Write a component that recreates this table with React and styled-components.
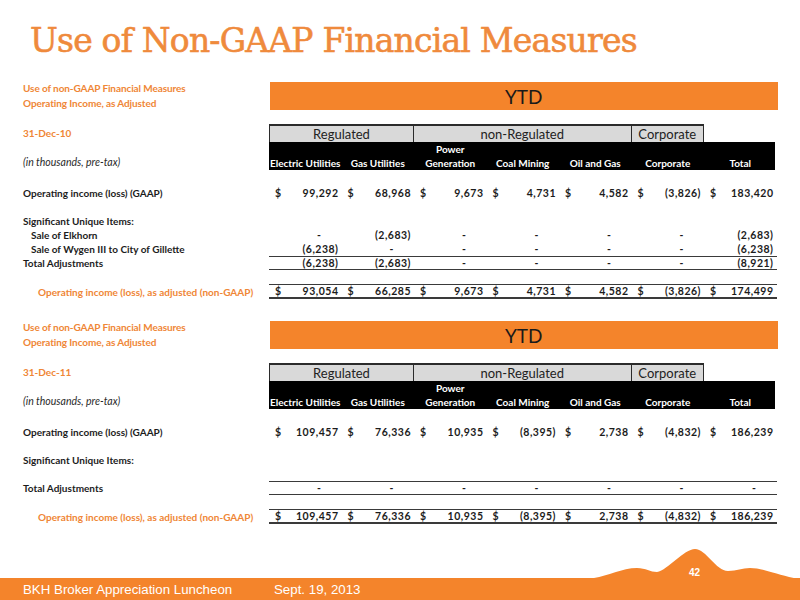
import React from 'react';
import styled, { createGlobalStyle, css } from 'styled-components';

const ORANGE = '#f4842b';
const TEXT_ORANGE = '#ef8636';
const INK = '#1c1c1c';

const GlobalStyle = createGlobalStyle`
  html, body {
    margin: 0;
    padding: 0;
    background: #fff;
  }
  body {
    font-family: 'Lato', 'Liberation Sans', sans-serif;
  }
`;

const rowGrid = css`
  display: grid;
  grid-template-columns: 246px repeat(7, 72.5px);
`;

const Page = styled.div`
  width: 800px;
  height: 600px;
  display: flex;
  flex-direction: column;
  overflow: hidden;
  background: #fff;
`;

const Title = styled.h1`
  box-sizing: border-box;
  height: 80px;
  margin: 0;
  padding: 21px 0 0 30px;
  font-family: 'DejaVu Serif', 'Liberation Serif', serif;
  font-weight: normal;
  font-size: 33px;
  line-height: 40px;
  letter-spacing: -0.8px;
  color: #ef8a3c;
  -webkit-text-stroke: 0.6px #ef8a3c;
  white-space: nowrap;
`;

const Block = styled.section`
  margin-left: 23px;
  margin-top: ${p => p.$gap || 0}px;
`;

const HeadRow = styled.div`
  ${rowGrid};
  height: 32px;
  align-items: center;
`;

const CaptionStack = styled.div`
  display: flex;
  flex-direction: column;
`;

const Caption = styled.span`
  font-size: 10px;
  line-height: 15px;
  letter-spacing: -0.1px;
  font-weight: bold;
  color: ${TEXT_ORANGE};
  white-space: nowrap;
`;

const YtdBar = styled.div`
  grid-column: 2 / span 7;
  height: 28px;
  margin-left: 1px;
  margin-right: -1px;
  background: ${ORANGE};
  display: flex;
  align-items: center;
  justify-content: center;
  font-size: 19px;
  color: #1a1a1a;
`;

const GroupRow = styled.div`
  ${rowGrid};
  height: 18px;
  margin-top: 12px;
`;

const DateLabel = styled.span`
  align-self: center;
  font-size: 10px;
  font-weight: bold;
  color: ${TEXT_ORANGE};
`;

const GroupBox = styled.div`
  grid-column: span ${p => p.$span};
  box-sizing: border-box;
  background: #d9d9d9;
  border: 1.5px solid #2b2b2b;
  border-top-width: 2px;
  border-bottom: 0;
  display: flex;
  align-items: center;
  justify-content: center;
  font-size: 13px;
  color: #222;

  & + & {
    border-left-width: 0;
  }
`;

const ColumnRow = styled.div`
  ${rowGrid};
  height: 28px;
`;

const UnitsLabel = styled.span`
  align-self: end;
  padding-bottom: 1px;
  font-size: 10.5px;
  line-height: 13px;
  font-style: italic;
  color: #2a2a2a;
`;

const ColumnBar = styled.div`
  grid-column: 2 / span 7;
  display: grid;
  grid-template-columns: repeat(7, 72.5px);
  margin-right: 2px;
  background: #000;
`;

const ColumnName = styled.div`
  align-self: end;
  text-align: center;
  font-size: 10px;
  line-height: 13.5px;
  font-weight: bold;
  color: #fff;
  white-space: nowrap;
`;

const Rows = styled.div`
  padding-top: 16px;
`;

const DataRow = styled.div`
  ${rowGrid};
  height: 14px;
`;

const RowLabel = styled.span`
  align-self: center;
  padding-left: ${p => p.$indent || 0}px;
  font-size: 10px;
  font-weight: bold;
  color: ${p => (p.$accent ? TEXT_ORANGE : INK)};
  white-space: nowrap;
`;

const ValueCell = styled.div`
  box-sizing: border-box;
  display: flex;
  align-items: center;
  justify-content: ${p => (p.$dollar ? 'space-between' : 'flex-end')};
  padding: 0 3px 0 6px;
  font-size: 10.5px;
  letter-spacing: 0.5px;
  font-weight: bold;
  color: ${INK};
  border-top: ${p => (p.$rule ? '1.5px solid #3a3a3a' : '0')};
  border-bottom: ${p =>
    p.$rule === 'double' ? '2.5px solid #3a3a3a' : p.$rule ? '1.5px solid #3a3a3a' : '0'};
`;

const Dash = styled.span`
  margin-right: 17px;
`;

const Footer = styled.footer`
  position: relative;
  margin-top: auto;
  height: 52px;
  display: flex;
  flex-direction: column;
  justify-content: flex-end;
`;

const Ridge = styled.svg`
  display: block;
  width: 800px;
  height: 30px;
`;

const PageNumber = styled.span`
  position: absolute;
  left: 689px;
  top: 19px;
  font-family: 'Liberation Sans', Arial, sans-serif;
  font-weight: bold;
  font-size: 10px;
  color: #fff;
`;

const Band = styled.div`
  height: 22px;
  background: ${ORANGE};
  display: flex;
  align-items: center;
  padding-left: 23px;
  font-family: 'Liberation Sans', Arial, sans-serif;
  font-size: 13.3px;
  color: #fff;
`;

const BandItem = styled.span`
  width: ${p => p.$width || 'auto'};
  white-space: nowrap;
`;

const COLUMNS = [
  'Electric Utilities',
  'Gas Utilities',
  ['Power', 'Generation'],
  'Coal Mining',
  'Oil and Gas',
  'Corporate',
  'Total',
];

const BLOCKS = [
  {
    date: '31-Dec-10',
    gap: 0,
    rows: [
      { label: 'Operating income (loss) (GAAP)', dollar: true, values: ['99,292', '68,968', '9,673', '4,731', '4,582', '(3,826)', '183,420'] },
      { blank: true },
      { label: 'Significant Unique Items:' },
      { label: 'Sale of Elkhorn', indent: 8, values: ['-', '(2,683)', '-', '-', '-', '-', '(2,683)'] },
      { label: 'Sale of Wygen III to City of Gillette', indent: 8, values: ['(6,238)', '-', '-', '-', '-', '-', '(6,238)'] },
      { label: 'Total Adjustments', rule: 'single', values: ['(6,238)', '(2,683)', '-', '-', '-', '-', '(8,921)'] },
      { blank: true },
      { label: 'Operating income (loss), as adjusted (non-GAAP)', indent: 15, accent: true, dollar: true, rule: 'double', values: ['93,054', '66,285', '9,673', '4,731', '4,582', '(3,826)', '174,499'] },
    ],
  },
  {
    date: '31-Dec-11',
    gap: 21,
    rows: [
      { label: 'Operating income (loss) (GAAP)', dollar: true, values: ['109,457', '76,336', '10,935', '(8,395)', '2,738', '(4,832)', '186,239'] },
      { blank: true },
      { label: 'Significant Unique Items:' },
      { blank: true },
      { label: 'Total Adjustments', rule: 'single', values: ['-', '-', '-', '-', '-', '-', '-'] },
      { blank: true },
      { label: 'Operating income (loss), as adjusted (non-GAAP)', indent: 15, accent: true, dollar: true, rule: 'double', values: ['109,457', '76,336', '10,935', '(8,395)', '2,738', '(4,832)', '186,239'] },
    ],
  },
];

function Row({ row }) {
  if (row.blank) return <DataRow />;
  return (
    <DataRow>
      <RowLabel $indent={row.indent} $accent={row.accent}>{row.label}</RowLabel>
      {row.values &&
        row.values.map((v, i) => (
          <ValueCell key={i} $dollar={row.dollar} $rule={row.rule}>
            {row.dollar && <span>$</span>}
            {v === '-' ? <Dash>-</Dash> : <span>{v}</span>}
          </ValueCell>
        ))}
    </DataRow>
  );
}

function MeasureBlock({ block }) {
  return (
    <Block $gap={block.gap}>
      <HeadRow>
        <CaptionStack>
          <Caption>Use of non-GAAP Financial Measures</Caption>
          <Caption>Operating Income, as Adjusted</Caption>
        </CaptionStack>
        <YtdBar>YTD</YtdBar>
      </HeadRow>
      <GroupRow>
        <DateLabel>{block.date}</DateLabel>
        <GroupBox $span={2}>Regulated</GroupBox>
        <GroupBox $span={3}>non-Regulated</GroupBox>
        <GroupBox $span={1}>Corporate</GroupBox>
      </GroupRow>
      <ColumnRow>
        <UnitsLabel>(in thousands, pre-tax)</UnitsLabel>
        <ColumnBar>
          {COLUMNS.map((c, i) => (
            <ColumnName key={i}>
              {Array.isArray(c) ? (
                <>
                  {c[0]}
                  <br />
                  {c[1]}
                </>
              ) : (
                c
              )}
            </ColumnName>
          ))}
        </ColumnBar>
      </ColumnRow>
      <Rows>
        {block.rows.map((r, i) => (
          <Row key={i} row={r} />
        ))}
      </Rows>
    </Block>
  );
}

export default function App() {
  return (
    <Page>
      <GlobalStyle />
      <Title>Use of Non-GAAP Financial Measures</Title>
      {BLOCKS.map(b => (
        <MeasureBlock key={b.date} block={b} />
      ))}
      <Footer>
        <Ridge viewBox="0 0 800 30">
          <path
            d="M594,30 C608,28 622,20 637,20 C646,20 650,24 657,24 C668,22 684,1 695,1 C706,1 716,23 728,23 C737,23 742,20 750,20 C764,20 778,28 800,31 L800,30 Z"
            fill={ORANGE}
          />
        </Ridge>
        <PageNumber>42</PageNumber>
        <Band>
          <BandItem $width="251px">BKH Broker Appreciation Luncheon</BandItem>
          <BandItem>Sept. 19, 2013</BandItem>
        </Band>
      </Footer>
    </Page>
  );
}
